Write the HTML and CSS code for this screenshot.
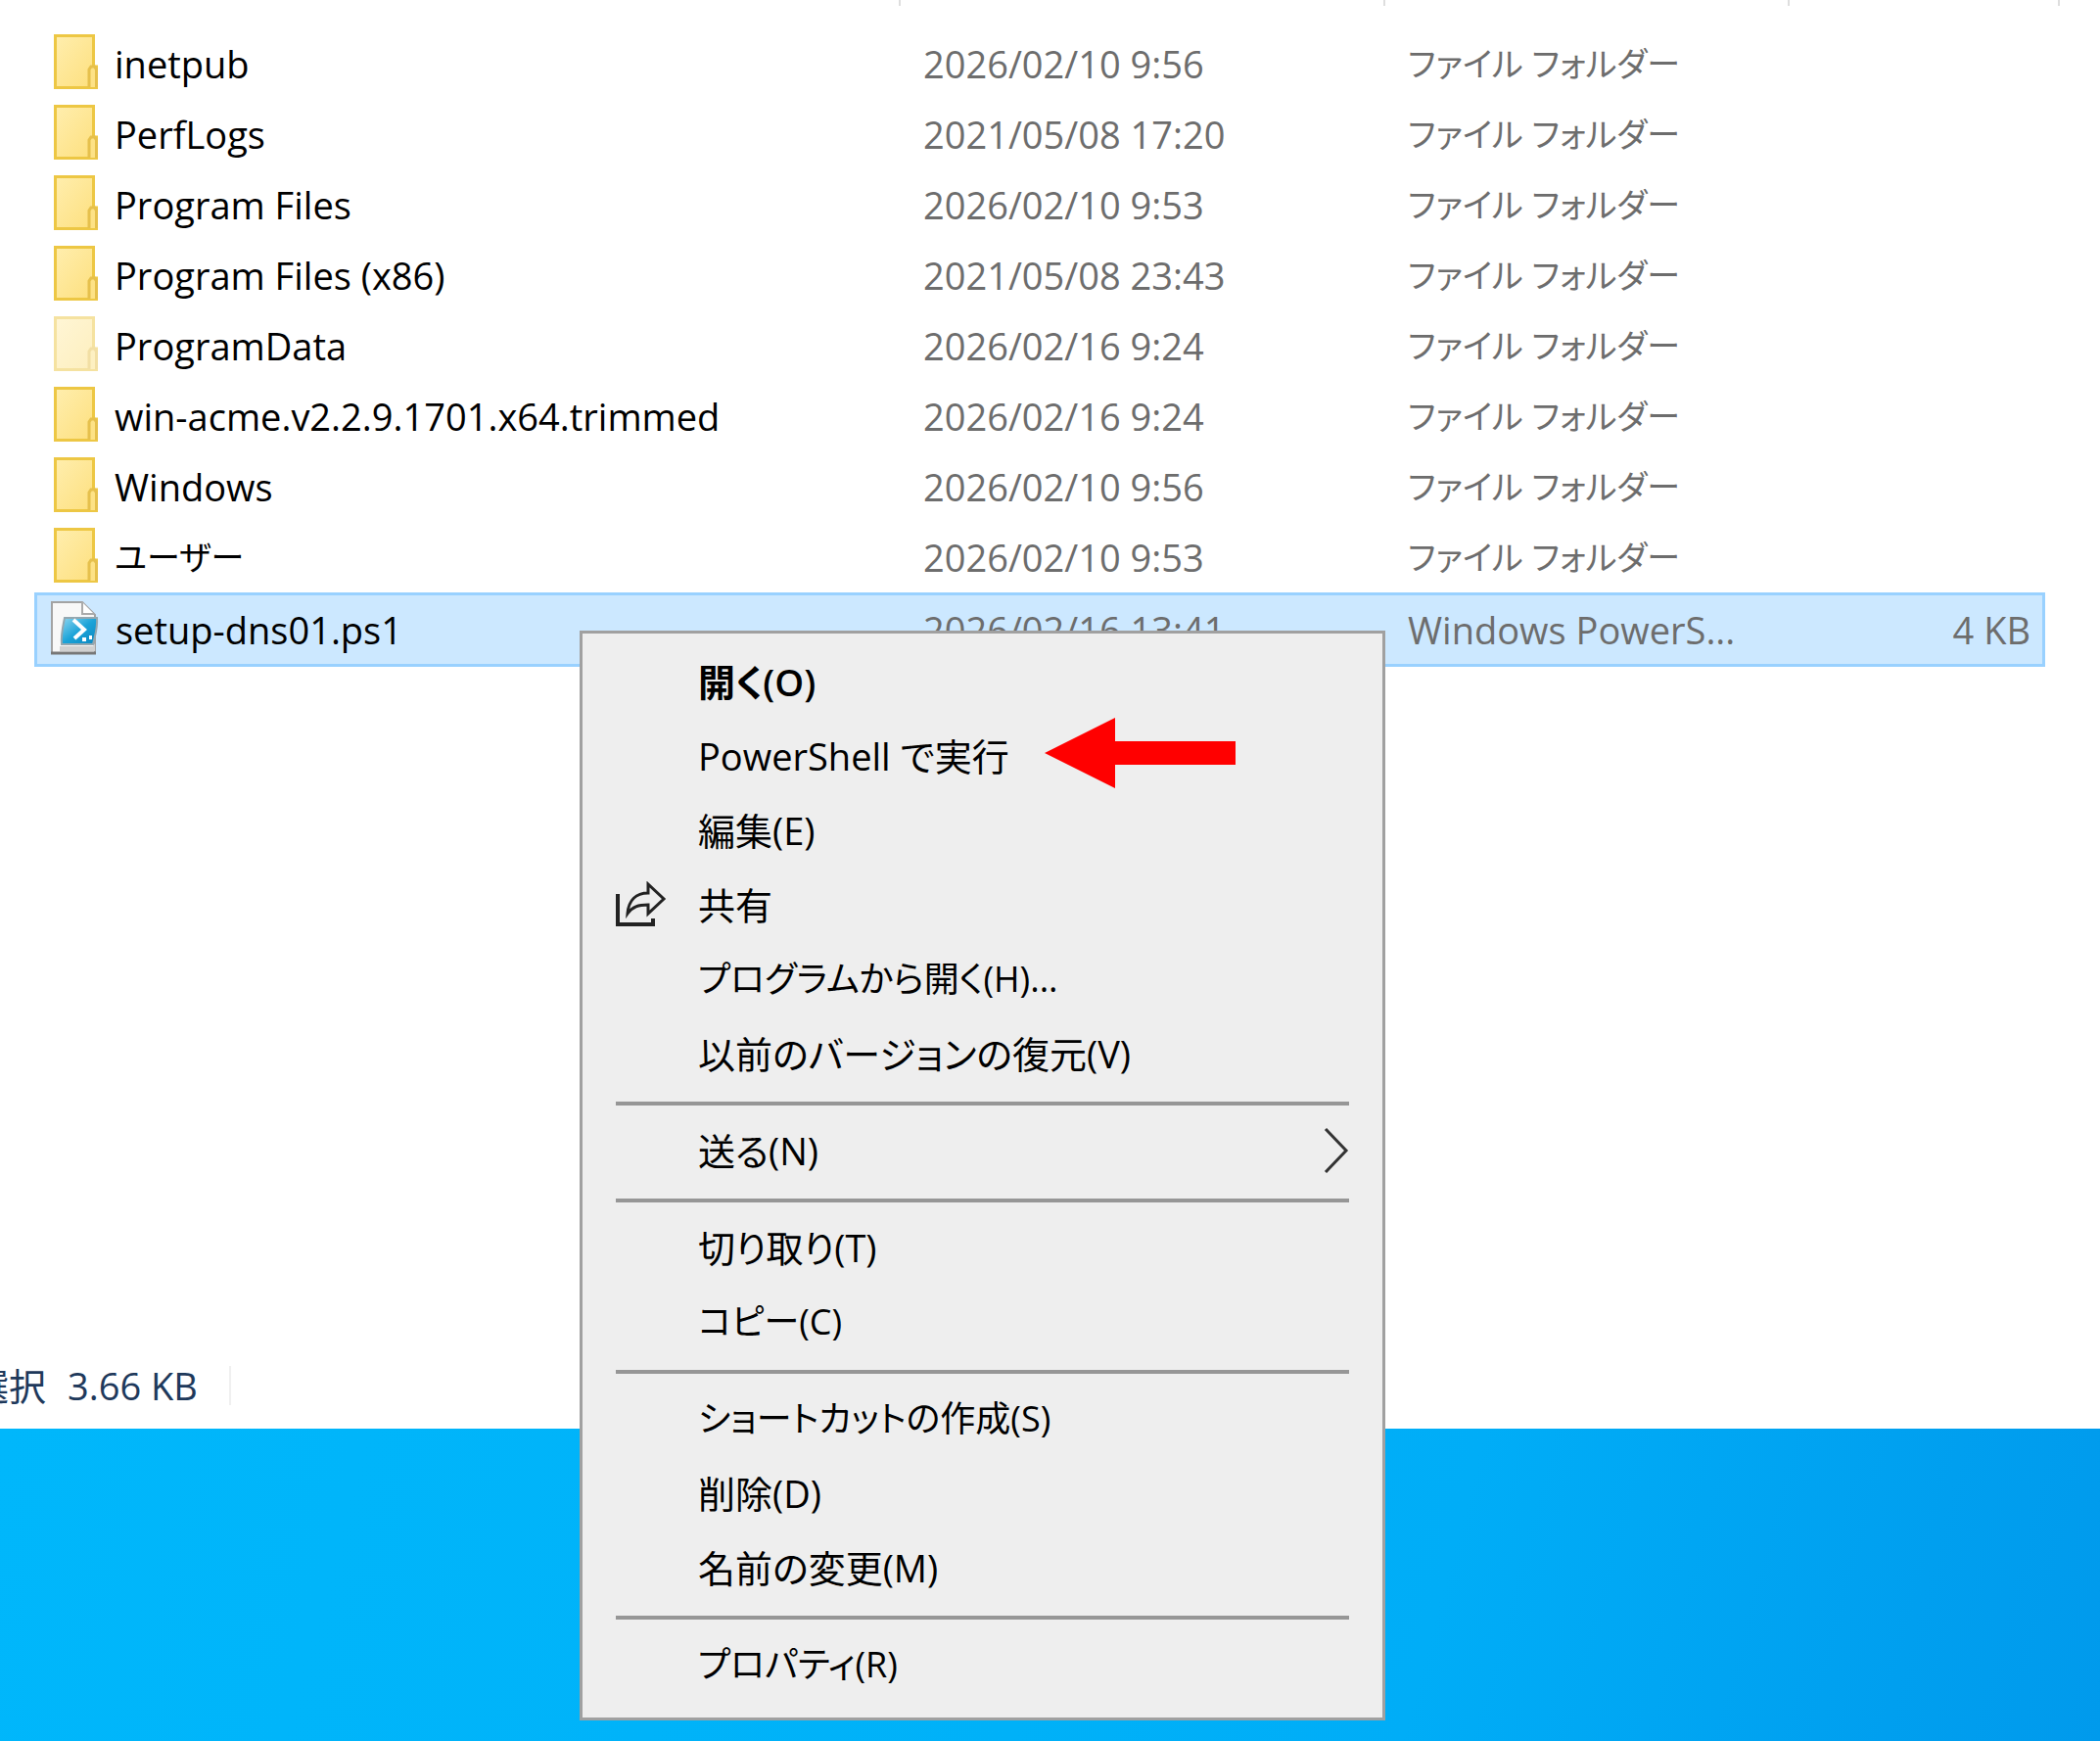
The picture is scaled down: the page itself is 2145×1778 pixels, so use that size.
FILE: index.html
```html
<!DOCTYPE html>
<html lang="ja">
<head>
  <meta charset="UTF-8" />
  <meta name="viewport" content="width=device-width, initial-scale=1" />
  <title>エクスプローラー</title>
  <link rel="stylesheet" href="styles.css">
</head>
<body>

  <svg class="defs" width="0" height="0">
    <defs>
      <linearGradient id="folderFill" x1="0" y1="0" x2="1" y2="1">
        <stop offset="0" stop-color="#ffeeae" />
        <stop offset="1" stop-color="#fddf7c" />
      </linearGradient>
      <linearGradient id="psFill" x1="0" y1="0" x2="1" y2="1">
        <stop offset="0" stop-color="#8fd6f0" />
        <stop offset="0.5" stop-color="#1ba3d8" />
        <stop offset="1" stop-color="#0a86c0" />
      </linearGradient>
      <symbol id="folder" viewBox="0 0 45 56">
        <path d="M1.500 1.500H40.500V33H43.500V54.500H1.500Z" fill="url(#folderFill)" stroke="#edc744" stroke-width="3" />
        <path d="M36 54V36L38 33H41.500L43.500 36V54" fill="#fde286" stroke="#e6c04c" stroke-width="3" />
      </symbol>
    </defs>
  </svg>

  <main class="window">
    <div class="column-lines">
      <span class="line-name"></span>
      <span class="line-date"></span>
      <span class="line-type"></span>
      <span class="line-size"></span>
    </div>

    <table class="files">
      <colgroup>
        <col>
        <col class="col-date">
        <col class="col-type">
        <col class="col-size">
      </colgroup>
      <tbody id="fileRows">
        <!-- file rows go here -->
      </tbody>
    </table>

    <footer class="status">
      <span class="status-count">選択</span>
      <span class="status-size">3.66 KB</span>
    </footer>
  </main>

  <div class="desktop"></div>

  <div class="menu">
    <button type="button" class="default">開く(O)</button>
    <button type="button">PowerShell で実行
      <svg class="arrow" width="195" height="72" viewBox="0 0 195 72"><path d="M0 36L72 0V24H195V48H72V72Z" fill="#ff0000" /></svg>
    </button>
    <button type="button">編集(E)</button>
    <button type="button">
      <svg class="share" width="52" height="48" viewBox="0 0 52 48" fill="none" stroke="#222" stroke-width="4">
        <path d="M2 13V44H38V38" />
        <path d="M12 33C13 19 21 12 33 12V3L49 18L33 33V24C23 24 17 26 12 33Z" stroke-width="3" />
      </svg>
      共有
    </button>
    <button type="button" class="kana">プログラムから開く(H)...</button>
    <button type="button">以前のバージョンの復元(V)</button>
    <hr>
    <button type="button">送る(N)
      <svg class="chevron" width="26" height="46" viewBox="0 0 26 46" fill="none" stroke="#333" stroke-width="3"><path d="M2 1L23 23L2 45" /></svg>
    </button>
    <hr>
    <button type="button">切り取り(T)</button>
    <button type="button" class="kana">コピー(C)</button>
    <hr>
    <button type="button" class="kana">ショートカットの作成(S)</button>
    <button type="button">削除(D)</button>
    <button type="button">名前の変更(M)</button>
    <hr>
    <button type="button" class="kana">プロパティ(R)</button>
  </div>

  <script>
    const files = [
      { name: 'inetpub', date: '2026/02/10 9:56' },
      { name: 'PerfLogs', date: '2021/05/08 17:20' },
      { name: 'Program Files', date: '2026/02/10 9:53' },
      { name: 'Program Files (x86)', date: '2021/05/08 23:43' },
      { name: 'ProgramData', date: '2026/02/16 9:24', hidden: true },
      { name: 'win-acme.v2.2.9.1701.x64.trimmed', date: '2026/02/16 9:24' },
      { name: 'Windows', date: '2026/02/10 9:56' },
      { name: 'ユーザー', date: '2026/02/10 9:53', kana: true },
      { name: 'setup-dns01.ps1', date: '2026/02/16 13:41', type: 'Windows PowerS...', size: '4 KB' }
    ];

    const folderIcon = '<svg class="icon" width="45" height="56"><use href="#folder" /></svg>';
    const scriptIcon = `
      <svg class="icon" width="50" height="56" viewBox="0 0 50 56">
        <path d="M2 2H33L46 15V54H2Z" fill="#f8f8f8" stroke="#a3a3a3" stroke-width="2" />
        <path d="M33 2V14H45" fill="#fff" stroke="#aaa" stroke-width="2" />
        <path d="M10 47H44L46 44V52H10Z" fill="#d0d0d0" />
        <path d="M1 54H47" stroke="#777" stroke-width="3" />
        <path d="M15 18H48C49 28 46 36 44 45H12C11 36 13 28 15 18Z" fill="url(#psFill)" stroke="#93a7b0" stroke-width="2" />
        <path d="M24 20L35 30L25 39M33 40H37M40 38H43" fill="none" stroke="#fff" stroke-width="4" />
      </svg>`;

    const tbody = document.getElementById('fileRows');

    files.forEach((file) => {
      const row = document.createElement('tr');
      if (file.hidden) row.className = 'hidden-item';
      if (file.size) row.className = 'selected';

      row.innerHTML = `
        <td class="${file.kana ? 'kana' : ''}"><div class="name">${file.size ? scriptIcon : folderIcon}<span>${file.name}</span></div></td>
        <td>${file.date}</td>
        <td class="${file.type ? '' : 'kana'}">${file.type || 'ファイル フォルダー'}</td>
        <td class="size">${file.size || ''}</td>
      `;
      tbody.appendChild(row);
    });
  </script>

</body>
</html>
```

FILE: styles.css
```css
* {
  box-sizing: border-box;
}
body {
  margin: 0;
  min-height: 100vh;
  display: flex;
  flex-direction: column;
  position: relative;
  font-family: "Open Sans", "Noto Sans CJK JP", sans-serif;
  font-size: 38px;
  line-height: 52px;
  font-feature-settings: "palt";
  color: #000;
}
.defs {
  position: absolute;
}
.window {
  flex: 1;
  display: flex;
  flex-direction: column;
  background: #fff;
  overflow: hidden;
}
.column-lines {
  display: flex;
  height: 6px;
  margin-bottom: 23px;
  padding-right: 41px;
}
.column-lines span {
  border-right: 2px solid #dedede;
}
.line-name {
  flex: 1;
}
.line-date {
  width: 495px;
}
.line-type {
  width: 413px;
}
.line-size {
  width: 276px;
}
.files {
  table-layout: fixed;
  border-collapse: separate;
  border-spacing: 0;
  width: calc(100% - 91px);
  margin-left: 35px;
}
.col-date {
  width: 495px;
}
.col-type {
  width: 413px;
}
.col-size {
  width: 262px;
}
.files td {
  height: 72px;
  padding: 0 0 0 24px;
  color: #6d6d6d;
  white-space: nowrap;
}
.files td:first-child {
  padding-left: 20px;
  color: #000;
}
.files td.kana {
  font-size: 34px;
}
.files td.size {
  padding-right: 12px;
  text-align: right;
}
.name {
  display: flex;
  align-items: center;
  gap: 17px;
}
.icon {
  flex: none;
  margin-bottom: 4px;
}
.hidden-item .icon {
  opacity: 0.5;
}
.files .selected td {
  height: 76px;
  background: #cce8ff;
  border: solid #99d1ff;
  border-width: 3px 0;
}
.files .selected td:first-child {
  padding-left: 13px;
  border-left-width: 3px;
}
.files .selected td:last-child {
  border-right-width: 3px;
}
.status {
  display: flex;
  align-items: center;
  width: 236px;
  height: 40px;
  margin-top: auto;
  margin-bottom: 24px;
  border-right: 2px solid #f0f0f0;
  color: #1e395b;
  white-space: nowrap;
}
.status-count {
  display: flex;
  justify-content: flex-end;
  width: 47px;
}
.status-size {
  margin-left: 22px;
}
.desktop {
  height: 319px;
  background: linear-gradient(105deg, #00b7fb 0%, #00b1f8 50%, #00adf7 68%, #009fef 90%, #009aec 100%);
}
.menu {
  position: absolute;
  top: 644px;
  left: 592px;
  width: 823px;
  padding: 11px 0 16px;
  background: #eee;
  border: 3px solid #a0a0a0;
}
.menu button {
  display: flex;
  align-items: center;
  position: relative;
  width: 100%;
  height: 76px;
  padding: 0 34px 0 118px;
  border: none;
  background: none;
  font: inherit;
  font-feature-settings: inherit;
  color: #000;
  text-align: left;
  white-space: nowrap;
}
.menu button:hover {
  background: #fff;
}
.menu .default {
  font-weight: 600;
}
.menu .kana {
  font-size: 36px;
}
.menu hr {
  height: 4px;
  margin: 11px 34px 8px;
  border: none;
  background: #969696;
}
.arrow {
  margin-left: 36px;
  margin-bottom: 6px;
}
.share {
  position: absolute;
  left: 34px;
}
.chevron {
  margin-left: auto;
}
```
